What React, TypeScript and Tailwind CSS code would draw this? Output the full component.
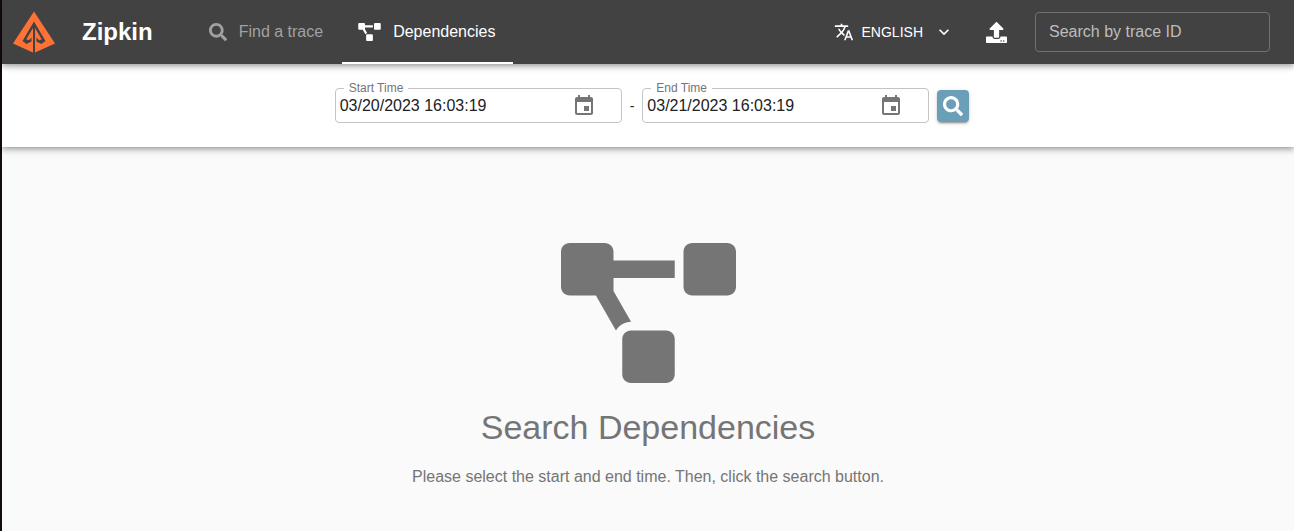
import { useState } from "react";
import { FaProjectDiagram, FaSearch, FaUpload } from "react-icons/fa";
import { MdEvent, MdExpandMore, MdTranslate } from "react-icons/md";

function Logo() {
  return (
    <svg viewBox="0 0 42 42" className="h-[42px] w-[42px]" role="img" aria-label="Zipkin logo">
      <path fill="#ff7235" d="M21 .5 42 32.5 21 42 0 32.5Z" />
      <path
        fill="#424242"
        d="M21 10.5 9.5 30 13.5 33 18.5 30.5V26.5L15.8 29.2 13.3 28.2 20 17V42H22V17L28.7 28.2 26.2 29.2 23.5 26.5V30.5L28.5 33 32.5 30Z"
      />
    </svg>
  );
}

function TimeField({ id, label, initial }: { id: string; label: string; initial: string }) {
  const [value, setValue] = useState(initial);
  return (
    <div className="relative flex h-[35px] w-[287px] items-center rounded border border-[#c4c4c4] pl-1 pr-[25px]">
      <label htmlFor={id} className="absolute -top-[9px] left-2 bg-white px-[5px] text-xs leading-4 text-[#757575]">
        {label}
      </label>
      <input
        id={id}
        type="text"
        value={value}
        onChange={(e) => setValue(e.target.value)}
        className="min-w-0 flex-1 bg-transparent text-base text-[#212121] outline-none"
      />
      <button type="button" aria-label={`Choose ${label}`} className="text-[#757575]">
        <MdEvent className="h-6 w-6" />
      </button>
    </div>
  );
}

export default function App() {
  return (
    <div className="flex min-h-screen flex-col border-l-2 border-[#140a14] bg-[#fafafa] font-['Liberation_Sans',Arial,sans-serif] text-base text-[#212121]">
      <header className="relative z-20 flex h-16 items-center bg-[#424242] pl-[11px] pr-6 text-white shadow-[0_2px_4px_-1px_rgba(0,0,0,0.2),0_4px_5px_rgba(0,0,0,0.14),0_1px_10px_rgba(0,0,0,0.12)]">
        <Logo />
        <h1 className="ml-[27px] text-2xl font-bold">Zipkin</h1>
        <nav className="ml-10 flex h-full gap-[3px]">
          <a href="#find" className="flex items-center gap-3 px-4 text-[#a1a1a1]">
            <FaSearch className="h-[18px] w-[18px]" />
            Find a trace
          </a>
          <a
            href="#dependencies"
            className="flex min-w-[171px] items-center gap-3 border-b-2 border-white px-4 pt-0.5"
          >
            <FaProjectDiagram className="h-[18px] w-[23px]" />
            Dependencies
          </a>
        </nav>
        <div className="ml-auto flex items-center">
          <button type="button" className="flex items-center gap-2 text-sm">
            <MdTranslate className="h-5 w-5" />
            ENGLISH
            <MdExpandMore className="ml-[3px] h-5 w-5" />
          </button>
          <button type="button" aria-label="Upload JSON" className="mx-7 pl-1">
            <FaUpload className="h-[21px] w-[21px]" />
          </button>
          <input
            type="text"
            aria-label="Search by trace ID"
            placeholder="Search by trace ID"
            className="h-10 w-[235px] rounded border border-[#717171] bg-transparent px-[13px] text-base outline-none placeholder:text-[#bdbdbd]"
          />
        </div>
      </header>

      <form
        onSubmit={(e) => e.preventDefault()}
        className="relative z-10 flex items-center justify-center gap-2 bg-white py-6 pl-2 shadow-[0_2px_4px_-1px_rgba(0,0,0,0.2),0_4px_5px_rgba(0,0,0,0.14),0_1px_10px_rgba(0,0,0,0.12)]"
      >
        <TimeField id="start-time" label="Start Time" initial="03/20/2023 16:03:19" />
        <span className="text-sm">-</span>
        <TimeField id="end-time" label="End Time" initial="03/21/2023 16:03:19" />
        <button
          type="submit"
          aria-label="Search"
          className="flex h-8 w-8 items-center justify-center rounded bg-[#6b9fb8] text-white shadow-[0_3px_1px_-2px_rgba(0,0,0,0.2),0_2px_2px_rgba(0,0,0,0.14),0_1px_5px_rgba(0,0,0,0.12)]"
        >
          <FaSearch className="h-5 w-5" />
        </button>
      </form>

      <main className="flex flex-col items-center pt-24 text-[#757575]">
        <FaProjectDiagram className="h-[140px] w-[175px]" />
        <h2 className="mt-6 text-[34px] leading-10">Search Dependencies</h2>
        <p className="mt-[18px] leading-6">Please select the start and end time. Then, click the search button.</p>
      </main>
    </div>
  );
}
